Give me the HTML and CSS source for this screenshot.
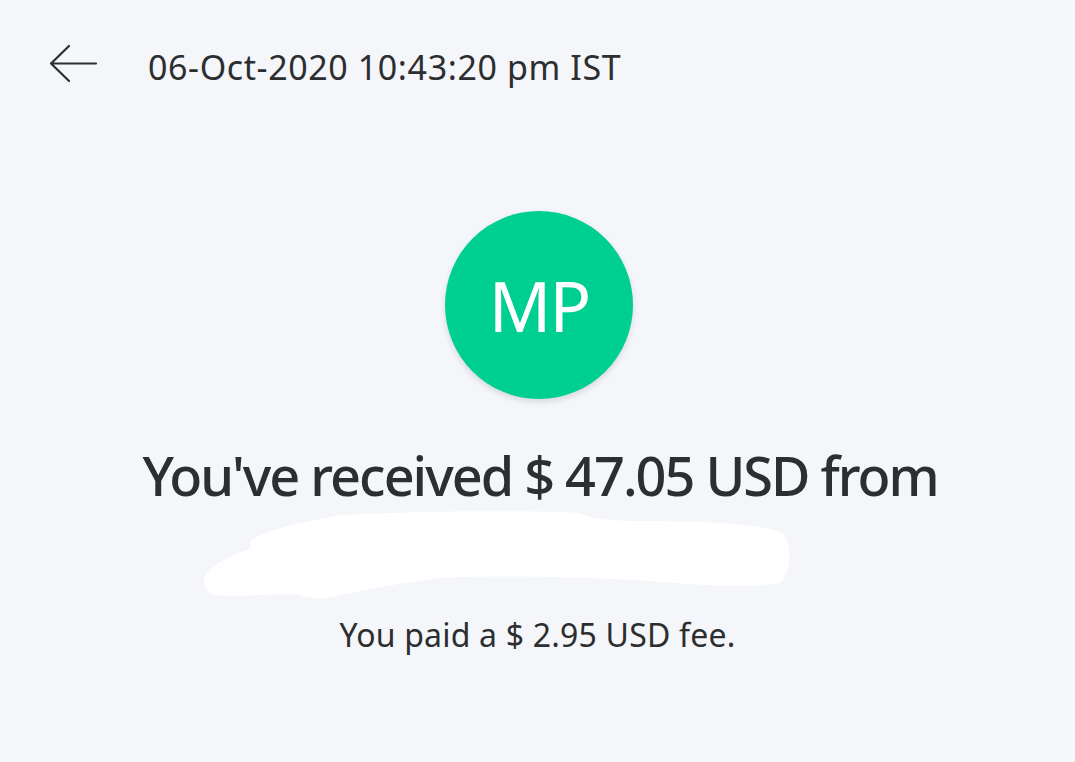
FILE: index.html
```html
<!DOCTYPE html>
<html>
<head>
<meta charset="utf-8">
<link rel="stylesheet" href="styles.css">
</head>
<body>
<div class="page">
  <header class="top">
    <svg class="back" width="50" height="40" viewBox="0 0 50 40">
      <path d="M48 19.5 H3 M21 2 L3 19.5 L21 37" fill="none" stroke="#2c2e2f" stroke-width="2.2" stroke-linecap="round" stroke-linejoin="round"/>
    </svg>
    <div class="date">06-Oct-2020 10:43:20 pm IST</div>
  </header>
  <main class="content">
    <div class="avatar">MP</div>
    <h1 class="title">You've received $ 47.05 USD from</h1>
    <svg class="redact" width="1075" height="100" viewBox="0 510 1075 100">
      <path d="M250 548 C 270 535, 310 528, 340 522 C 420 518, 520 517, 580 520 C 590 524, 600 528, 640 528 C 700 528, 760 530, 782 540 C 792 548, 792 580, 780 590 C 740 596, 700 592, 650 588 C 580 584, 500 582, 440 585 C 400 590, 370 596, 340 602 C 325 607, 310 607, 300 602 C 270 600, 240 605, 215 602 C 203 598, 200 585, 210 577 C 220 568, 235 560, 250 556 Z" fill="#ffffff"/>
    </svg>
    <p class="fee">You paid a $ 2.95 USD fee.</p>
  </main>
</div>
</body>
</html>
```

FILE: styles.css
```css
html, body {
  margin: 0;
  padding: 0;
  background: #f5f6fa;
}
body {
  width: 1075px;
  height: 762px;
  overflow: hidden;
  font-family: "Noto Sans", "Open Sans", sans-serif;
  color: #2c2e2f;
}
.page {
  display: flex;
  flex-direction: column;
}
.top {
  display: flex;
  align-items: center;
  padding: 44px 0 0 48px;
  gap: 50px;
  height: 40px;
}
.back {
  display: block;
}
.date {
  font-size: 34px;
  letter-spacing: 0.6px;
  line-height: 40px;
  margin-top: 6px;
}
.content {
  display: flex;
  flex-direction: column;
  align-items: center;
  padding-top: 127px;
}
.avatar {
  width: 188px;
  height: 188px;
  border-radius: 50%;
  background: #00cf92;
  color: #ffffff;
  font-size: 69px;
  letter-spacing: -2px;
  display: flex;
  align-items: center;
  justify-content: center;
  box-shadow: 0 3px 6px rgba(0, 0, 0, 0.12);
  margin-left: 3px;
}
.title {
  margin: 44px 0 0 0;
  font-size: 54px;
  font-weight: 500;
  line-height: 64px;
  letter-spacing: -2px;
  padding-left: 5px;
}
.redact {
  display: block;
  margin-top: -4px;
}
.fee {
  margin: 12px 0 0 0;
  font-size: 32px;
  line-height: 40px;
  letter-spacing: 0.2px;
}
```
